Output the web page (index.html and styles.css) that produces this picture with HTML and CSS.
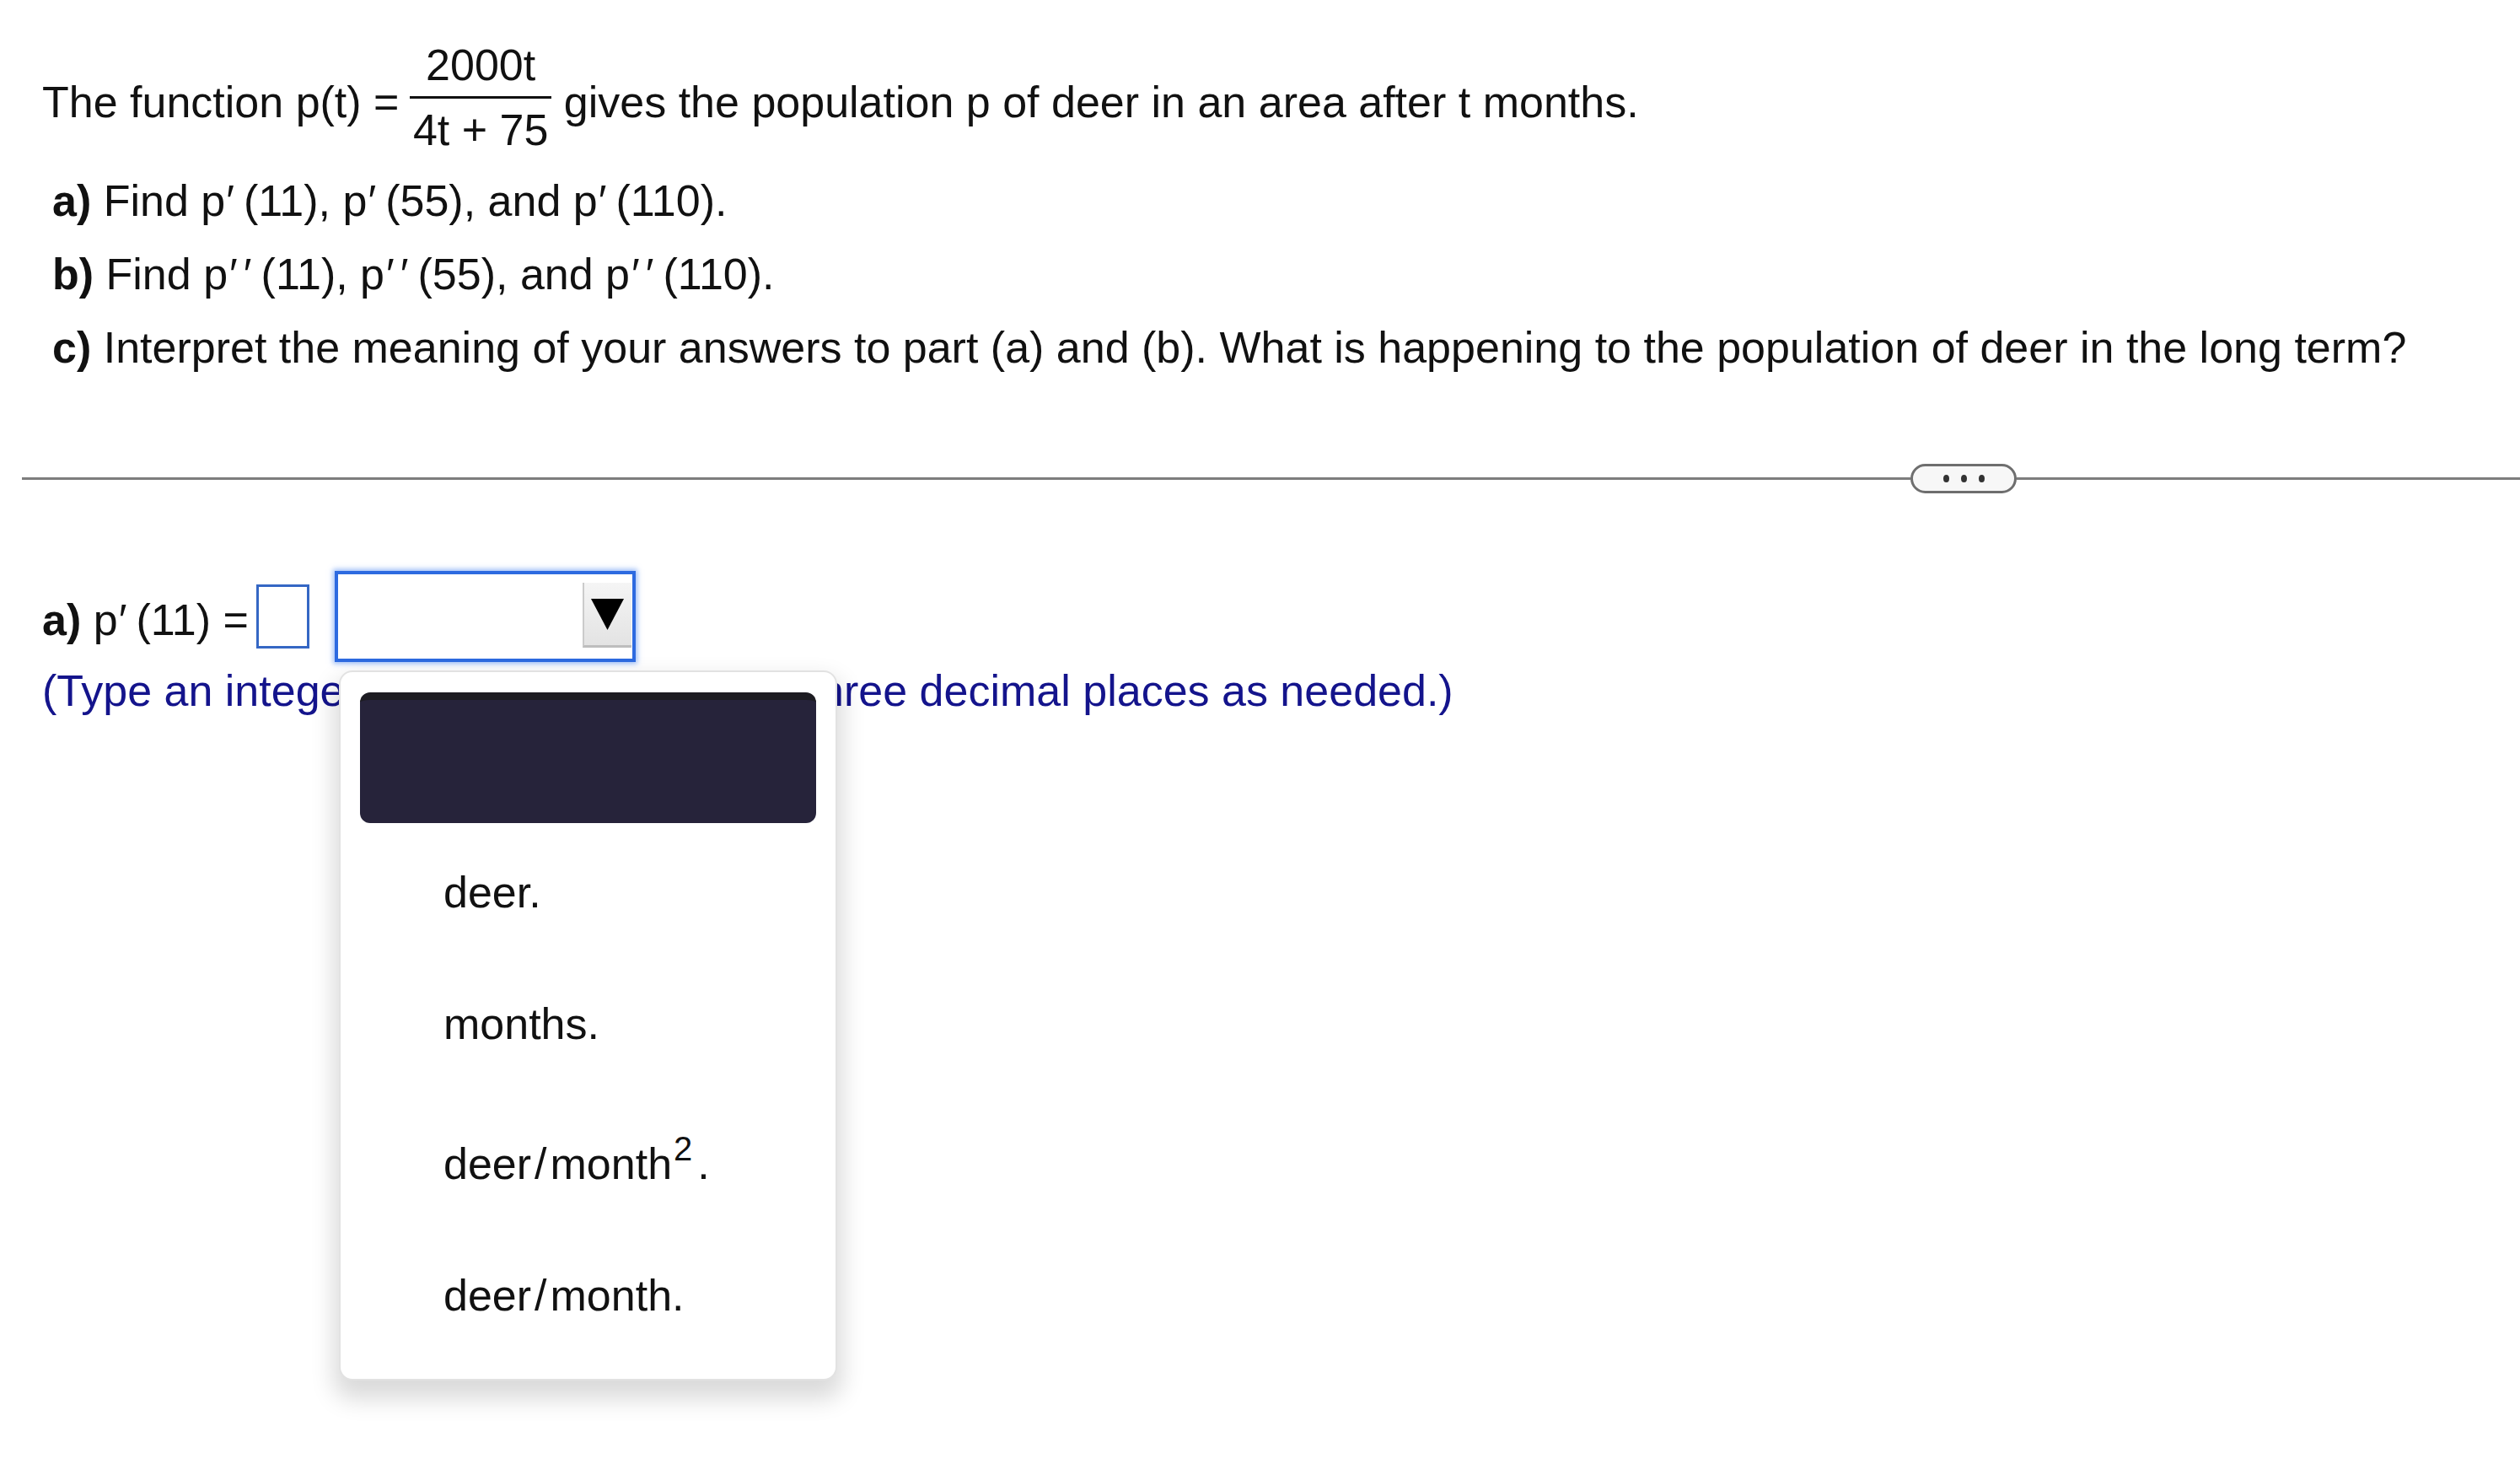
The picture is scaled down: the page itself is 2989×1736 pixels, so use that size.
FILE: index.html
```html
<!DOCTYPE html>
<html lang="en">
<head>
<meta charset="utf-8">
<title>Deer population</title>
<link rel="stylesheet" href="styles.css">
</head>
<body>
<main class="page">
  <section class="question">
    <p class="stem">The function p(t) = <span class="frac"><span class="num">2000t</span><span class="den">4t + 75</span></span> gives the population p of deer in an area after t months.</p>
    <ol class="parts">
      <li><b>a)</b> Find p<span class="pr">′</span>(11), p<span class="pr">′</span>(55), and p<span class="pr">′</span>(110).</li>
      <li><b>b)</b> Find p<span class="pr2">′′</span>(11), p<span class="pr2">′′</span>(55), and p<span class="pr2">′′</span>(110).</li>
      <li><b>c)</b> Interpret the meaning of your answers to part (a) and (b). What is happening to the population of deer in the long term?</li>
    </ol>
  </section>

  <div class="divider">
    <span class="rule"></span>
    <span class="more"><i></i><i></i><i></i></span>
    <span class="rule rule-end"></span>
  </div>

  <section class="answer">
    <div class="row">
      <span class="label"><b>a)</b> p<span class="pr">′</span>(11) =</span>
      <span class="blank"></span>
      <span class="select">
        <span class="arrow">
          <svg width="39" height="37" viewBox="0 0 39 37"><polygon points="0,0 39,0 19.5,37" fill="#000"/></svg>
        </span>
      </span>
    </div>
    <p class="hint">(Type an integer or decimal rounded to three decimal places as needed.)</p>

    <div class="menu">
      <div class="menu-head"></div>
      <ul class="options">
        <li>deer.</li>
        <li>months.</li>
        <li>deer<span class="slash">/</span>month<sup>2</sup>.</li>
        <li>deer<span class="slash">/</span>month.</li>
      </ul>
    </div>
  </section>
</main>
</body>
</html>
```

FILE: styles.css
```css
html, body {
  margin: 0;
  background: #fff;
}

body {
  font-family: "Liberation Sans", Arial, Helvetica, sans-serif;
  font-size: 52px;
  color: #111;
}

.page {
  padding-top: 52px;
  min-height: 1736px;
  box-sizing: border-box;
}

.question {
  padding-left: 50px;
}

.stem {
  margin: 0;
  line-height: 57px;
  white-space: nowrap;
}

.frac {
  display: inline-flex;
  flex-direction: column;
  align-items: stretch;
  text-align: center;
  vertical-align: 44px;
  margin: 0 0 0 -2px;
}

.num {
  line-height: 50px;
  padding: 0 4px 12px;
}

.den {
  line-height: 50px;
  border-top: 3px solid #111;
  padding: 12px 4px 0;
}

.pr {
  margin: 0 11px 0 1px;
}

.pr2 {
  margin: 0 4px 0 2px;
  letter-spacing: 7px;
}

.parts {
  list-style: none;
  margin: 16px 0 0;
  padding-left: 12px;
  line-height: 87px;
  white-space: nowrap;
}

.divider {
  display: flex;
  align-items: center;
  height: 35px;
  margin: 94px 0 0 26px;
}

.rule {
  flex: 1;
  height: 3px;
  background: #7d7d7d;
}

.rule-end {
  flex: 0 0 597px;
}

.more {
  width: 126px;
  height: 35px;
  box-sizing: border-box;
  border: 3px solid #6e6e6e;
  border-radius: 18px;
  background: #f7f7f7;
  display: flex;
  align-items: center;
  justify-content: center;
  gap: 14px;
}

.more i {
  width: 7px;
  height: 9px;
  border-radius: 50%;
  background: #333;
}

.answer {
  position: relative;
  padding-left: 50px;
  margin-top: 92px;
}

.row {
  display: flex;
  align-items: center;
  height: 108px;
}

.label {
  margin-right: 9px;
  padding-top: 8px;
  line-height: 57px;
}

.blank {
  width: 63px;
  height: 76px;
  box-sizing: border-box;
  border: 3px solid #3567c4;
  margin-right: 30px;
}

.select {
  width: 357px;
  height: 108px;
  box-sizing: border-box;
  border: 4px solid #2d6ae0;
  box-shadow: 0 0 6px 2px rgba(70, 130, 240, 0.55);
  background: #fff;
  display: flex;
  justify-content: flex-end;
  align-items: flex-start;
  padding: 10px 1px 0 0;
}

.arrow {
  width: 58px;
  height: 77px;
  box-sizing: border-box;
  background: linear-gradient(#f5f5f5, #e3e3e3);
  border-left: 2px solid #cbcbcb;
  border-bottom: 3px solid #bdbdbd;
  display: flex;
  align-items: center;
  justify-content: center;
}

.hint {
  margin: 6px 0 0;
  color: #14148c;
  line-height: 57px;
  white-space: nowrap;
}

.menu {
  position: absolute;
  left: 402px;
  top: 118px;
  width: 591px;
  height: 842px;
  box-sizing: border-box;
  background: #fff;
  border: 2px solid #e2e2e2;
  border-radius: 16px;
  box-shadow: 0 16px 28px 6px rgba(0, 0, 0, 0.15);
  padding: 24px 23px 0;
}

.menu-head {
  height: 155px;
  box-sizing: border-box;
  background: #26233a;
  border-top: 9px solid #1d1c22;
  border-radius: 12px;
}

.options {
  list-style: none;
  margin: 5px 0 0;
  padding: 0 0 0 99px;
}

.options li {
  padding: 49px 0;
  line-height: 57px;
}

.options li + li {
  padding-top: 50px;
}

.slash {
  margin: 0 4px;
}

.options sup {
  font-size: 40px;
  line-height: 1;
  vertical-align: 22px;
  margin: 0 6px 0 2px;
}
```
